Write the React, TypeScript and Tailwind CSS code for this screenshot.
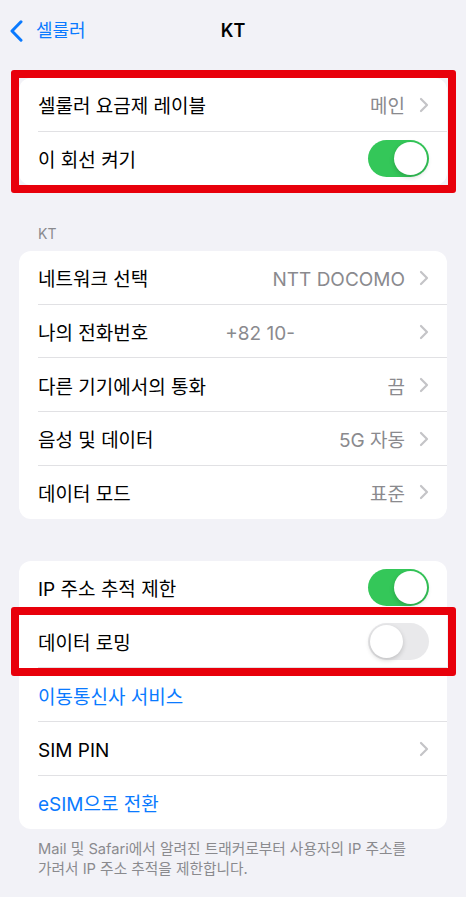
import type { ReactNode } from "react";

function Chevron() {
  return (
    <svg width="10" height="16" viewBox="0 0 10 16" className="shrink-0">
      <path
        d="M2 2 L8 8 L2 14"
        fill="none"
        stroke="#c4c4c7"
        strokeWidth="2.2"
        strokeLinecap="round"
        strokeLinejoin="round"
      />
    </svg>
  );
}

function Toggle({ on }: { on: boolean }) {
  return (
    <div
      className={`relative w-[61px] h-[37px] rounded-full shrink-0 ${
        on ? "bg-[#34c759]" : "bg-[#e9e9eb]"
      }`}
    >
      <div
        className={`absolute top-[2px] w-[33px] h-[33px] rounded-full bg-white shadow-[0_2px_5px_rgba(0,0,0,0.18)] ${
          on ? "right-[2px]" : "left-[2px]"
        }`}
      />
    </div>
  );
}

function Row({
  label,
  children,
  last,
  blue,
}: {
  label: string;
  children?: ReactNode;
  last?: boolean;
  blue?: boolean;
}) {
  return (
    <div className="relative h-[53.6px] flex items-center pl-[19px] pr-[18px]">
      <span
        className={`pt-[4px] text-[19px] leading-none ${blue ? "text-[#0a7aff]" : "text-black"}`}
      >
        {label}
      </span>
      <div className="ml-auto flex items-center">{children}</div>
      {!last && (
        <div className="absolute bottom-0 left-[19px] right-0 h-px bg-[#e1e1e4]" />
      )}
    </div>
  );
}

function Value({ text }: { text: string }) {
  return (
    <div className="flex items-center gap-[14px]">
      <span className="pt-[4px] text-[19px] leading-none text-[#8a8a8e]">{text}</span>
      <Chevron />
    </div>
  );
}

function RedBox() {
  return (
    <div className="absolute -top-[8px] -bottom-[8px] -left-[8px] -right-[9px] border-[8px] border-[#e8000b] rounded-[3px] pointer-events-none" />
  );
}

export default function App() {
  return (
    <div className="min-h-[897px] bg-[#f2f2f7] font-[Inter,'Noto_Sans_CJK_KR',sans-serif] pb-6">
      {/* Nav */}
      <div className="relative h-[62px] flex items-center justify-center">
        <div className="absolute left-[10px] top-[20px] flex items-center gap-[13px]">
          <svg width="13" height="22" viewBox="0 0 13 22">
            <path
              d="M11 1.8 L2 11 L11 20.2"
              fill="none"
              stroke="#0a7aff"
              strokeWidth="3"
              strokeLinecap="round"
              strokeLinejoin="round"
            />
          </svg>
          <span className="text-[18px] leading-none text-[#0a7aff]">셀룰러</span>
        </div>
        <span className="text-[18px] font-semibold leading-none text-black">KT</span>
      </div>

      <div className="px-[19px] pt-[16px]">
        {/* Group 1 */}
        <div className="relative bg-white rounded-[12px]">
          <Row label="셀룰러 요금제 레이블">
            <Value text="메인" />
          </Row>
          <Row label="이 회선 켜기" last>
            <Toggle on />
          </Row>
          <RedBox />
        </div>

        {/* Group 2 */}
        <div className="pt-[42px] pb-[10px] pl-[19px] text-[14px] leading-none text-[#8a8a8e]">
          KT
        </div>
        <div className="bg-white rounded-[12px]">
          <Row label="네트워크 선택">
            <Value text="NTT DOCOMO" />
          </Row>
          <Row label="나의 전화번호">
            <div className="flex items-center">
              <span className="pt-[4px] text-[19px] leading-none text-[#8a8a8e]">+82 10-</span>
              <div className="w-[124px]" />
              <Chevron />
            </div>
          </Row>
          <Row label="다른 기기에서의 통화">
            <Value text="끔" />
          </Row>
          <Row label="음성 및 데이터">
            <Value text="5G 자동" />
          </Row>
          <Row label="데이터 모드" last>
            <Value text="표준" />
          </Row>
        </div>

        {/* Group 3 */}
        <div className="mt-[42px] bg-white rounded-[12px]">
          <Row label="IP 주소 추적 제한">
            <Toggle on />
          </Row>
          <div className="relative">
            <Row label="데이터 로밍">
              <Toggle on={false} />
            </Row>
            <RedBox />
          </div>
          <Row label="이동통신사 서비스" blue />
          <Row label="SIM PIN">
            <Chevron />
          </Row>
          <Row label="eSIM으로 전환" blue last />
        </div>

        <p className="pt-[10px] pl-[19px] pr-[4px] text-[14.7px] leading-[20px] text-[#8a8a8e]">
          Mail 및 Safari에서 알려진 트래커로부터 사용자의 IP 주소를
          <br />
          가려서 IP 주소 추적을 제한합니다.
        </p>
      </div>
    </div>
  );
}
